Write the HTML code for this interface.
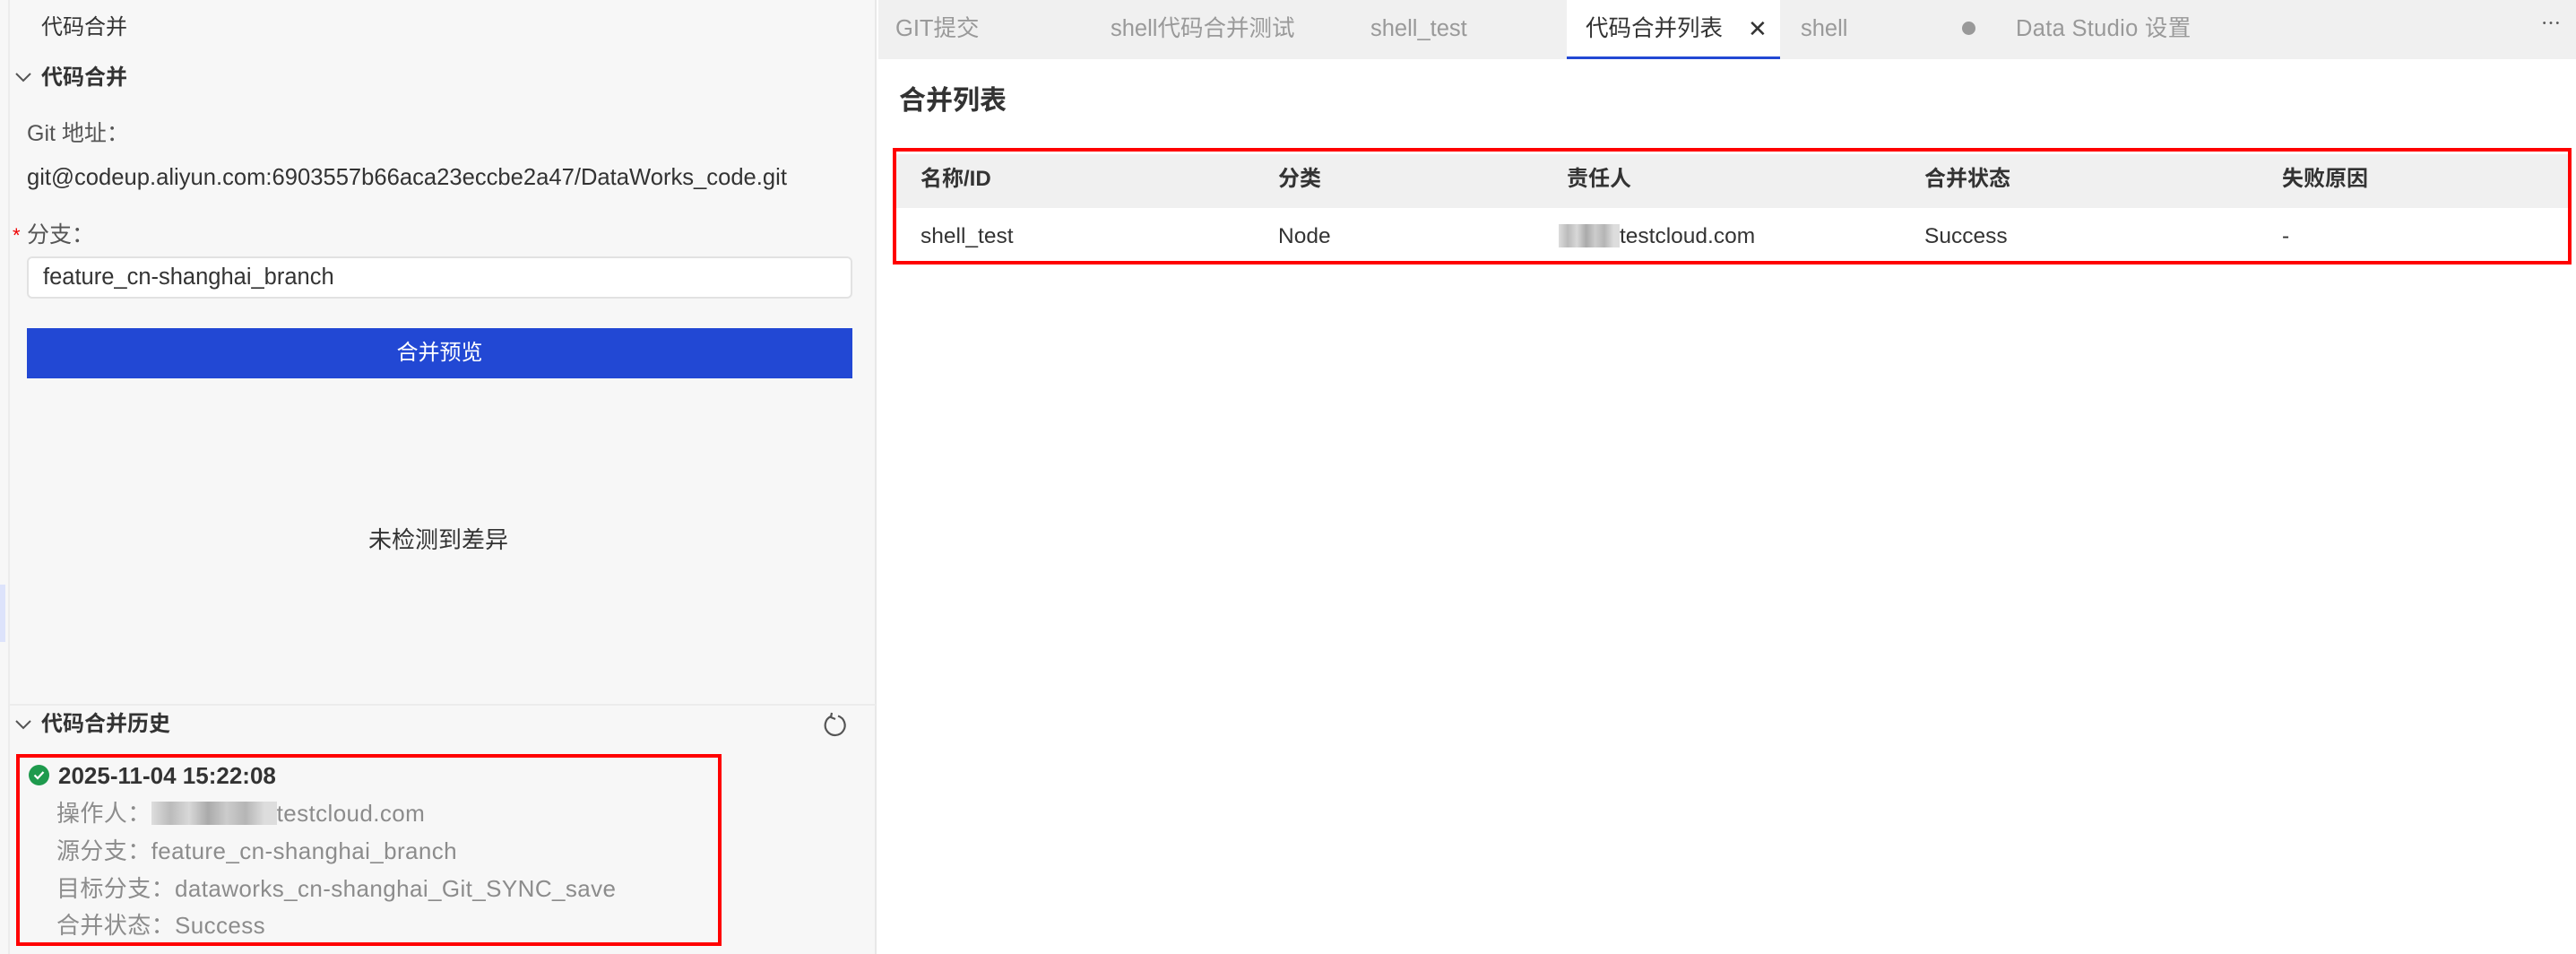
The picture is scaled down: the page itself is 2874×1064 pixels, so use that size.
<!DOCTYPE html>
<html><head><meta charset="utf-8"><style>
*{margin:0;padding:0;box-sizing:border-box}
body{width:2874px;height:1064px;overflow:hidden;background:#fff;font-family:"Liberation Sans","Noto Sans CJK SC",sans-serif;color:#333;position:relative}
.a{position:absolute;white-space:nowrap;line-height:1}
#left{position:absolute;left:0;top:0;width:978px;height:1064px;background:#f7f7f7;border-right:2px solid #e8e8e8}
#lb{position:absolute;left:9px;top:0;width:2px;height:1064px;background:#ececec}
.blur{display:inline-block;vertical-align:middle;height:26px;background:linear-gradient(90deg,#ddd 0,#bbb 15%,#d8d8d8 30%,#aaa 45%,#ccc 60%,#b5b5b5 75%,#ddd 90%)}
.h{font-size:26px;color:#8c8c8c;letter-spacing:0.4px}
</style></head><body>
<div id="left">
<div id="lb"></div>
<div style="position:absolute;left:0;top:652px;width:6px;height:64px;background:#dde3fb"></div>
<div class="a" style="left:46px;top:19px;font-size:24px">代码合并</div>
<svg class="a" style="left:16px;top:78px" width="20" height="16"><path d="M2 4 L10 12 L18 4" stroke="#555" stroke-width="2" fill="none"/></svg>
<div class="a" style="left:46px;top:75px;font-size:24px;font-weight:bold">代码合并</div>
<div class="a" style="left:30px;top:137px;font-size:25px;color:#555">Git 地址：</div>
<div class="a" style="left:30px;top:186px;font-size:25.6px">git@codeup.aliyun.com:6903557b66aca23eccbe2a47/DataWorks_code.git</div>
<div class="a" style="left:14px;top:252px;font-size:22px;color:#e00">*</div>
<div class="a" style="left:30px;top:250px;font-size:25px;color:#555">分支：</div>
<div style="position:absolute;left:30px;top:286px;width:921px;height:47px;background:#fff;border:2px solid #e2e2e2;border-radius:6px"></div>
<div class="a" style="left:48px;top:297px;font-size:25.5px">feature_cn-shanghai_branch</div>
<div style="position:absolute;left:30px;top:366px;width:921px;height:56px;background:#2248d4;color:#fff;font-size:24px;text-align:center;line-height:56px">合并预览</div>
<div class="a" style="left:411px;top:589px;font-size:26px">未检测到差异</div>
<div style="position:absolute;left:11px;top:785px;width:966px;height:2px;background:#ececec"></div>
<svg class="a" style="left:16px;top:800px" width="20" height="16"><path d="M2 4 L10 12 L18 4" stroke="#555" stroke-width="2" fill="none"/></svg>
<div class="a" style="left:46px;top:796px;font-size:24px;font-weight:bold">代码合并历史</div>
<svg class="a" style="left:918px;top:794px" width="28" height="28"><path d="M9 5 A11 11 0 1 0 17 4.5" stroke="#555" stroke-width="2.2" fill="none"/><path d="M10 1 L9 6 L14 8" stroke="#555" stroke-width="2.2" fill="none"/></svg>
<div style="position:absolute;left:18px;top:841px;width:787px;height:214px;border:4px solid #f00"></div>
<svg class="a" style="left:32px;top:853px" width="23" height="23"><circle cx="11.5" cy="11.5" r="11.5" fill="#1e9a4d"/><path d="M6.5 11.5 L10 15 L16.5 8" stroke="#fff" stroke-width="2.2" fill="none"/></svg>
<div class="a" style="left:65px;top:852px;font-size:26px;font-weight:bold">2025-11-04 15:22:08</div>
<div class="a h" style="left:63px;top:894px">操作人：<span class="blur" style="width:140px;margin-top:-4px"></span>testcloud.com</div>
<div class="a h" style="left:63px;top:936px">源分支：feature_cn-shanghai_branch</div>
<div class="a h" style="left:63px;top:978px">目标分支：dataworks_cn-shanghai_Git_SYNC_save</div>
<div class="a h" style="left:63px;top:1019px">合并状态：Success</div>
</div>

<div style="position:absolute;left:980px;top:0;width:1894px;height:66px;background:#f0f0f0"></div>
<div style="position:absolute;left:1748px;top:0;width:238px;height:66px;background:#fff;border-bottom:3px solid #2248d4"></div>
<div class="a" style="left:999px;top:20px;font-size:25.5px;color:#999">GIT提交</div>
<div class="a" style="left:1239px;top:20px;font-size:25.5px;color:#999">shell代码合并测试</div>
<div class="a" style="left:1529px;top:20px;font-size:25.5px;color:#999">shell_test</div>
<div class="a" style="left:1769px;top:20px;font-size:25.5px;color:#333">代码合并列表</div>
<div class="a" style="left:1950px;top:19px;font-size:26px;color:#333">✕</div>
<div class="a" style="left:2009px;top:20px;font-size:25.5px;color:#999">shell</div>
<div style="position:absolute;left:2189px;top:24px;width:15px;height:15px;border-radius:50%;background:#999"></div>
<div class="a" style="left:2249px;top:20px;font-size:25.5px;color:#999;letter-spacing:0.3px">Data Studio 设置</div>
<div class="a" style="left:2835px;top:16px;font-size:22px;color:#555">⋯</div>

<div class="a" style="left:1003px;top:98px;font-size:30px;font-weight:bold">合并列表</div>
<div style="position:absolute;left:996px;top:165px;width:1873px;height:130px;border:4px solid #f00"></div>
<div style="position:absolute;left:1000px;top:172px;width:1865px;height:60px;background:#f0f0f0"></div>
<div class="a" style="left:1027px;top:188px;font-size:24px;font-weight:bold">名称/ID</div>
<div class="a" style="left:1426px;top:188px;font-size:24px;font-weight:bold">分类</div>
<div class="a" style="left:1748px;top:188px;font-size:24px;font-weight:bold">责任人</div>
<div class="a" style="left:2147px;top:188px;font-size:24px;font-weight:bold">合并状态</div>
<div class="a" style="left:2546px;top:188px;font-size:24px;font-weight:bold">失败原因</div>
<div class="a" style="left:1027px;top:252px;font-size:24.5px">shell_test</div>
<div class="a" style="left:1426px;top:252px;font-size:24.5px">Node</div>
<div class="a" style="left:1739px;top:252px;font-size:24.5px"><span class="blur" style="width:68px;margin-top:-4px"></span>testcloud.com</div>
<div class="a" style="left:2147px;top:252px;font-size:24.5px">Success</div>
<div class="a" style="left:2546px;top:252px;font-size:24.5px">-</div>
</body></html>
